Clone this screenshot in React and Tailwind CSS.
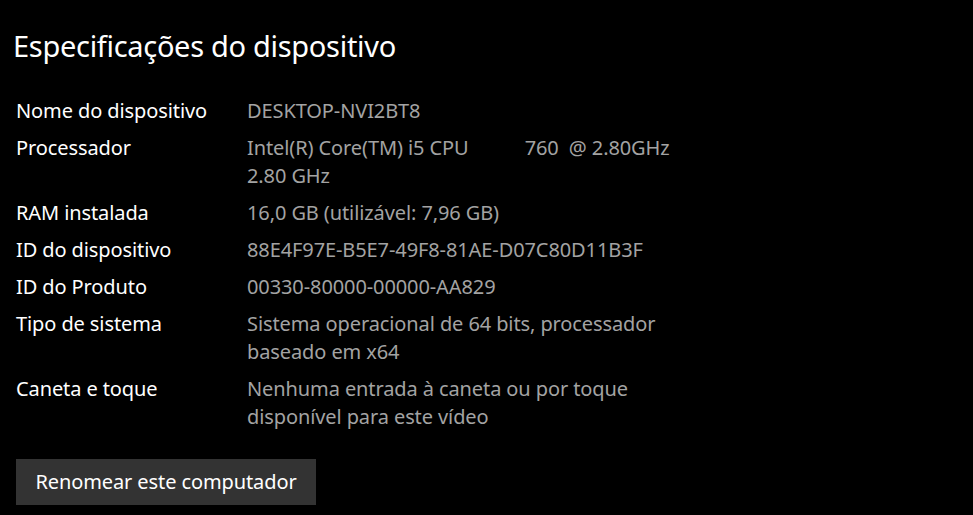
import React from 'react'

const specs = [
  { label: "Nome do dispositivo", value: ["DESKTOP-NVI2BT8"] },
  { label: "Processador", value: ["Intel(R) Core(TM) i5 CPU           760  @ 2.80GHz", "2.80 GHz"] },
  { label: "RAM instalada", value: ["16,0 GB (utilizável: 7,96 GB)"] },
  { label: "ID do dispositivo", value: ["88E4F97E-B5E7-49F8-81AE-D07C80D11B3F"] },
  { label: "ID do Produto", value: ["00330-80000-00000-AA829"] },
  { label: "Tipo de sistema", value: ["Sistema operacional de 64 bits, processador", "baseado em x64"] },
  { label: "Caneta e toque", value: ["Nenhuma entrada à caneta ou por toque", "disponível para este vídeo"] },
]

export default function App() {
  return (
    <div className="min-h-screen w-full bg-black text-white font-['Noto_Sans',sans-serif] pt-[26px] pl-[13px]">
      <h1 className="text-[29px] leading-[40px] tracking-[-0.3px]">Especificações do dispositivo</h1>

      <div className="mt-[31px] ml-[3px] flex flex-col gap-[9px]">
        {specs.map((s) => (
          <div key={s.label} className="flex text-[20px] leading-[28px] tracking-[-0.1px]">
            <div className="w-[231px] shrink-0">{s.label}</div>
            <div className="text-[#a3a3a3]">
              {s.value.map((line) => (
                <div key={line} className="whitespace-pre">{line}</div>
              ))}
            </div>
          </div>
        ))}
      </div>

      <button className="mt-[28px] ml-[3px] w-[300px] h-[46px] bg-[#333333] text-white text-[20px] tracking-[-0.1px]">
        Renomear este computador
      </button>
    </div>
  )
}
